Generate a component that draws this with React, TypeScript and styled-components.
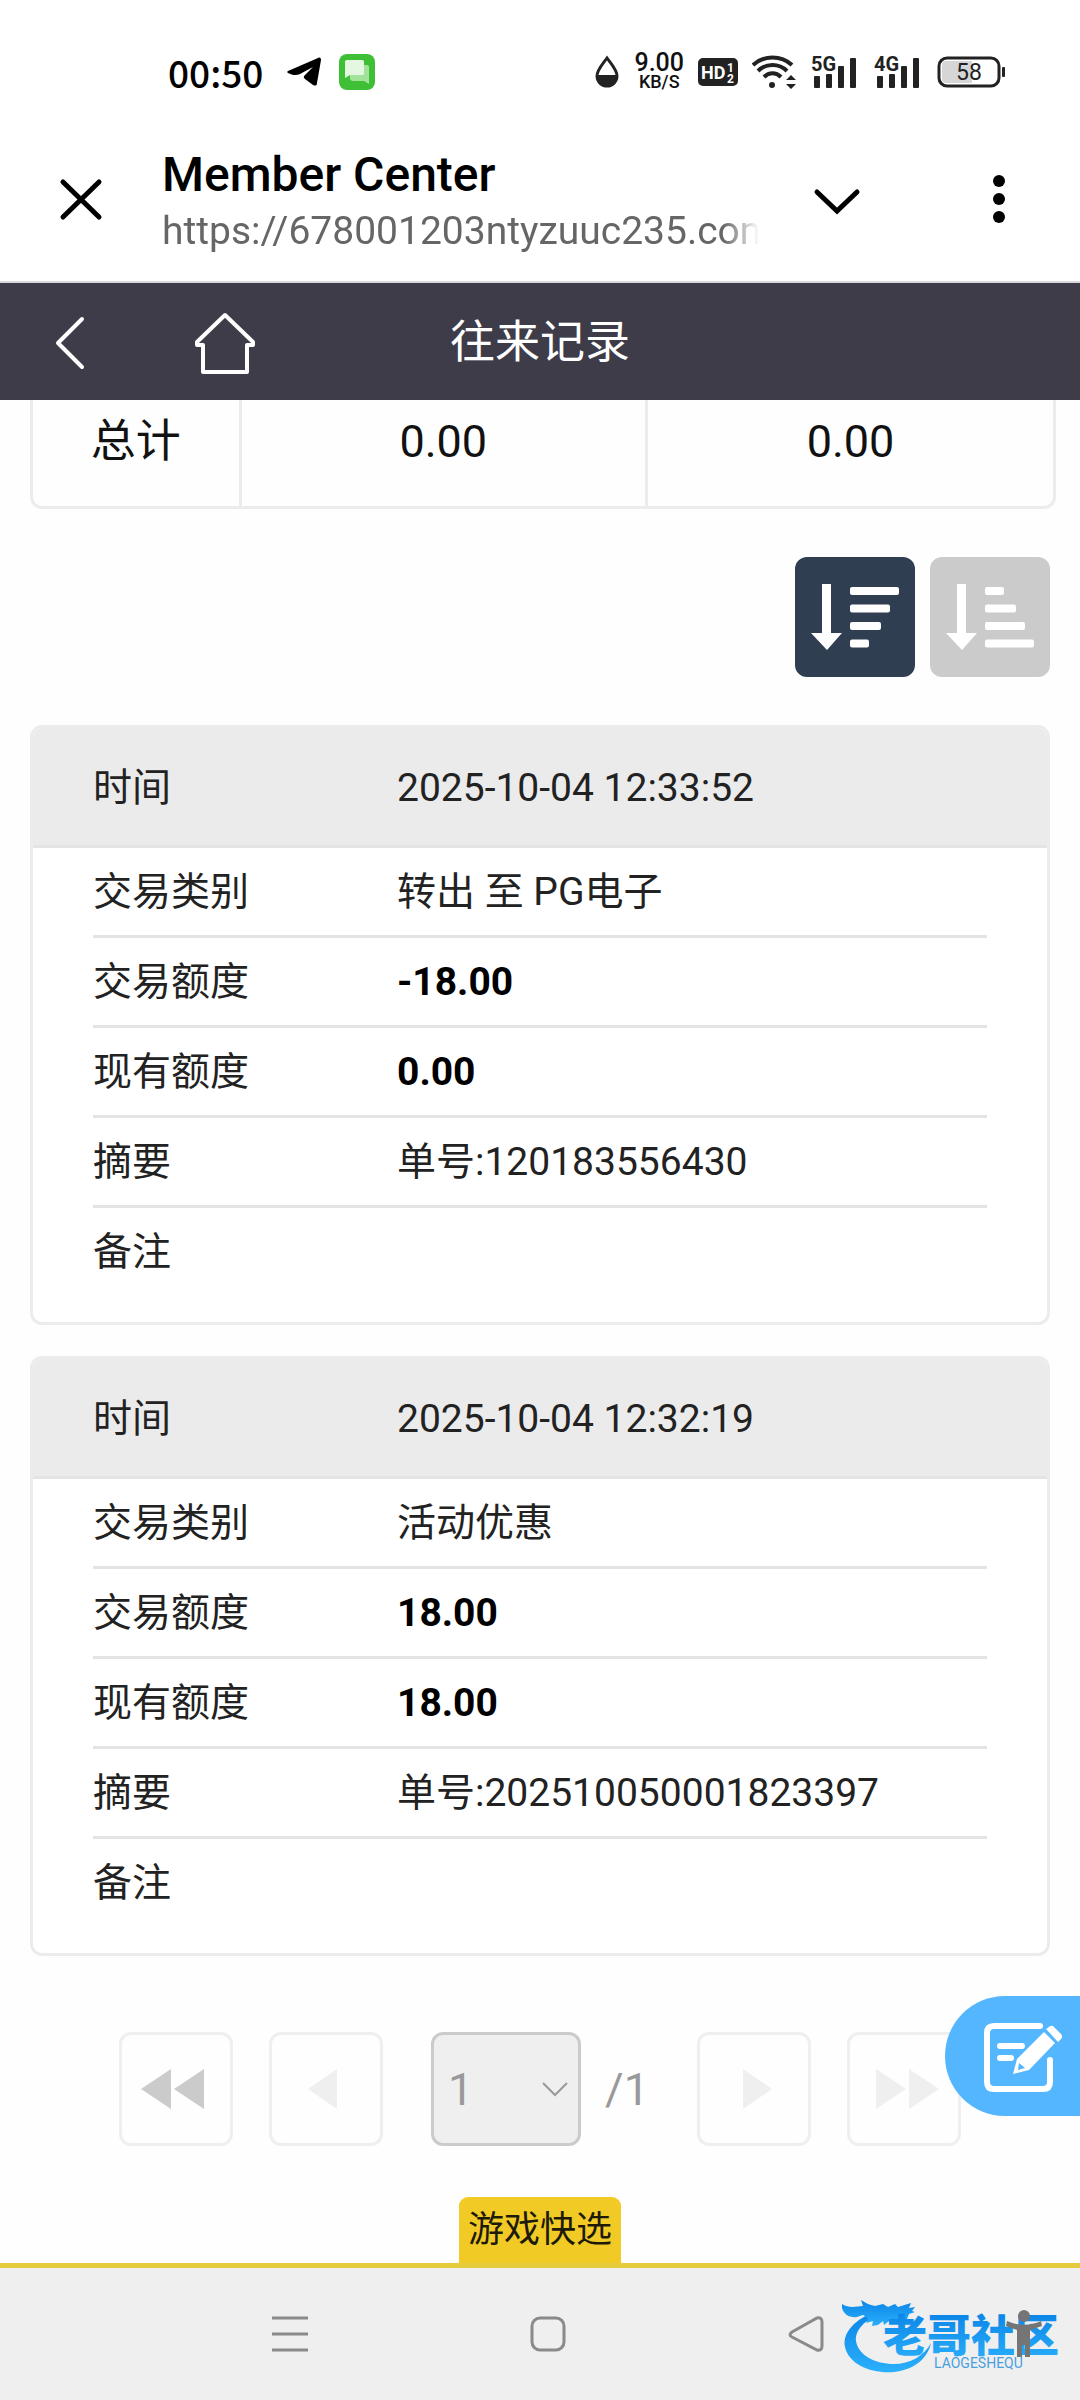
import React from "react";
import styled, { createGlobalStyle } from "styled-components";

const FONT = 'Roboto, "Noto Sans CJK SC", sans-serif';
const NARROW = '"Liberation Sans Narrow", Roboto, sans-serif';

const GlobalStyle = createGlobalStyle`
  * { box-sizing: border-box; }
  body { margin: 0; background: #fefefe; font-family: ${FONT}; color: #222; }
  button, select { font-family: inherit; }
  svg { display: block; flex: none; }
`;

const Page = styled.div`
  min-height: 100vh;
  display: flex;
  flex-direction: column;
  overflow-x: hidden;
`;

/* ---------- status bar ---------- */
const StatusBar = styled.div`
  display: flex;
  justify-content: space-between;
  align-items: center;
  height: 116px;
  padding: 28px 75px 0 168px;
  background: #fff;
`;
const StatusGroup = styled.div<{ $gap: number }>`
  display: flex;
  align-items: center;
  gap: ${(p) => p.$gap}px;
`;
const Clock = styled.time`
  font-family: "Noto Sans CJK SC", sans-serif;
  font-size: 37px;
  font-weight: 500;
  line-height: 44px;
  color: #000;
  margin-right: 6px;
`;
const NetSpeed = styled.div`
  display: flex;
  flex-direction: column;
  align-items: center;
  color: #111;
  font-weight: 500;
  font-size: 25px;
  line-height: 20px;
`;
const NetUnit = styled.span`
  font-size: 18px;
  line-height: 18px;
`;

/* ---------- browser bar ---------- */
const BrowserBar = styled.header`
  display: flex;
  align-items: center;
  height: 167px;
  padding: 0 60px 0 54px;
  border-bottom: 2px solid #d8d8dc;
  background: #fff;
`;
const IconButton = styled.button`
  display: flex;
  align-items: center;
  justify-content: center;
  padding: 0;
  border: 0;
  background: none;
  color: inherit;
`;
const PageInfo = styled.div`
  flex: 1;
  min-width: 0;
  margin: 4px 48px 0 54px;
`;
const PageTitle = styled.div`
  font-size: 48px;
  line-height: 60px;
  font-weight: 500;
  color: #000;
`;
const PageUrl = styled.div`
  font-size: 39px;
  line-height: 52px;
  color: #666;
  white-space: nowrap;
  overflow: hidden;
  mask-image: linear-gradient(to right, #000 94%, transparent 100%);
`;
const BrowserActions = styled.div`
  display: flex;
  align-items: center;
  gap: 111px;
`;

/* ---------- site header ---------- */
const SiteHeader = styled.nav`
  display: grid;
  grid-template-columns: 1fr auto 1fr;
  align-items: center;
  height: 117px;
  padding: 2px 52px 0;
  background: #3d3c48;
  color: #fff;
`;
const HeaderLinks = styled.div`
  display: flex;
  align-items: center;
  gap: 105px;
`;
const HeaderTitle = styled.h1`
  margin: 0;
  font-size: 45px;
  line-height: 60px;
  font-weight: 400;
`;

/* ---------- content ---------- */
const Content = styled.main`
  flex: 1;
  display: flex;
  flex-direction: column;
  padding: 0 30px;
`;
const TotalsFrame = styled.div`
  margin: 0 -6px 0 0;
  border: 3px solid #ececec;
  border-top: 0;
  border-radius: 0 0 12px 12px;
`;
const Totals = styled.table`
  width: 100%;
  table-layout: fixed;
  border-collapse: collapse;
  font-size: 45px;
  line-height: 54px;
  color: #111;
`;
const TotalLabel = styled.th`
  width: 207px;
  padding: 15px 0 37px;
  font-weight: 400;
`;
const TotalValue = styled.td`
  padding: 15px 0 37px;
  border-left: 3px solid #ececec;
  text-align: center;
`;
const SortRow = styled.div`
  display: flex;
  justify-content: flex-end;
  gap: 15px;
  margin: 48px 0;
`;
const SortButton = styled(IconButton)<{ $active?: boolean }>`
  width: 120px;
  height: 120px;
  border-radius: 12px;
  background: ${(p) => (p.$active ? "#303e51" : "#cbcbcb")};
`;
const CardList = styled.div`
  display: flex;
  flex-direction: column;
  gap: 31px;
`;
const Card = styled.dl`
  margin: 0;
  padding-bottom: 27px;
  border: 3px solid #ececec;
  border-radius: 12px;
  overflow: hidden;
  background: #fff;
  font-size: 39px;
  line-height: 54px;
`;
const CardRow = styled.div`
  display: flex;
  align-items: center;
  height: 90px;
  margin: 0 60px;
  border-bottom: 3px solid #e4e4e4;
  &:last-child { border-bottom: 0; height: 87px; }
`;
const CardHead = styled(CardRow)`
  height: 120px;
  margin: 0;
  padding: 2px 60px 0;
  background: #ebebeb;
`;
const Label = styled.dt`
  width: 304px;
`;
const Value = styled.dd<{ $strong?: boolean }>`
  margin: 0;
  font-weight: ${(p) => (p.$strong ? 700 : 400)};
  color: ${(p) => (p.$strong ? "#000" : "inherit")};
`;

/* ---------- pager ---------- */
const Pager = styled.nav`
  position: relative;
  display: flex;
  justify-content: center;
  gap: 36px;
  margin: 76px 0 50px;
`;
const PagerButton = styled(IconButton)<{ $strong?: boolean }>`
  width: 114px;
  height: 114px;
  border: 3px solid #efefef;
  border-radius: 12px;
  color: ${(p) => (p.$strong ? "#cbcbcb" : "#efefef")};
`;
const PageStatus = styled.div`
  display: flex;
  align-items: center;
  gap: 24px;
  margin: 0 12px;
  font-size: 45px;
  color: #999;
`;
const SelectBox = styled.label`
  position: relative;
  display: block;
`;
const PageSelect = styled.select`
  appearance: none;
  display: block;
  width: 150px;
  height: 114px;
  padding: 0 14px;
  border: 3px solid #cbcbcb;
  border-radius: 12px;
  background: #efefef;
  font-size: 45px;
  color: #999;
  opacity: 1;
`;
const SelectArrow = styled.svg`
  position: absolute;
  right: 13px;
  top: 49px;
  pointer-events: none;
`;
const FeedbackButton = styled(IconButton)`
  position: absolute;
  right: -30px;
  top: -36px;
  width: 135px;
  height: 120px;
  padding-left: 20px;
  border-radius: 60px 0 0 60px;
  background: #53b6ff;
  color: #fff;
`;

/* ---------- bottom ---------- */
const QuickPick = styled.button`
  align-self: center;
  margin-top: auto;
  height: 66px;
  padding: 0 9px;
  border: 0;
  border-radius: 9px 9px 0 0;
  background: #f1ca26;
  color: #1d1a08;
  font-size: 36px;
  line-height: 54px;
`;
const SystemNav = styled.nav`
  position: relative;
  display: grid;
  grid-template-columns: repeat(3, 258px) 1fr;
  align-items: center;
  height: 137px;
  padding: 0 36px 0 161px;
  border-top: 5px solid #e6cb3c;
  background: #efefef;
  color: #8a8a8a;
`;
const AccessButton = styled(IconButton)`
  justify-self: end;
  z-index: 1;
  color: #757575;
`;
const Watermark = styled.svg`
  position: absolute;
  right: 10px;
  top: 26px;
`;

type Entry = {
  time: string;
  kind: string;
  amount: string;
  balance: string;
  summary: string;
};

const entries: Entry[] = [
  { time: "2025-10-04 12:33:52", kind: "转出 至 PG电子", amount: "-18.00", balance: "0.00", summary: "单号:120183556430" },
  { time: "2025-10-04 12:32:19", kind: "活动优惠", amount: "18.00", balance: "18.00", summary: "单号:202510050001823397" },
];

const Signal = ({ label }: { label: string }) => (
  <svg width="46" height="46" viewBox="0 -6 46 46" fill="#222">
    <text x="0" y="16" fontFamily={NARROW} fontSize="20" fontWeight="700">{label}</text>
    <rect x="3" y="21" width="6" height="12" rx="1" />
    <rect x="15" y="19" width="6" height="14" rx="1" />
    <rect x="27" y="11" width="6" height="22" rx="1" />
    <rect x="39" y="3" width="6" height="30" rx="1" />
  </svg>
);

const SortIcon = ({ widths }: { widths: number[] }) => (
  <svg width="120" height="120" viewBox="0 0 120 120" fill="#fff">
    <path d="M27 27h9v49h11L32 93 16 76h11z" />
    {widths.map((w, i) => (
      <rect key={i} x="55" y={30 + i * 17.5} width={w} height="8" rx="2" />
    ))}
  </svg>
);

const Arrows = ({ double, flip }: { double?: boolean; flip?: boolean }) => (
  <svg width="72" height="42" viewBox="0 0 72 42" fill="currentColor">
    <g transform={flip ? "translate(72 0) scale(-1 1)" : undefined}>
      {double ? <path d="M1 21 31 1v40zM34 21 64 1v40z" /> : <path d="M18 21 47 1v40z" />}
    </g>
  </svg>
);

const EntryCard = ({ entry }: { entry: Entry }) => (
  <Card>
    <CardHead><Label>时间</Label><Value>{entry.time}</Value></CardHead>
    <CardRow><Label>交易类别</Label><Value>{entry.kind}</Value></CardRow>
    <CardRow><Label>交易额度</Label><Value $strong>{entry.amount}</Value></CardRow>
    <CardRow><Label>现有额度</Label><Value $strong>{entry.balance}</Value></CardRow>
    <CardRow><Label>摘要</Label><Value>{entry.summary}</Value></CardRow>
    <CardRow><Label>备注</Label><Value /></CardRow>
  </Card>
);

const BrandMark = () => (
  <Watermark width="228" height="84" viewBox="0 0 228 84" aria-hidden="true">
    <defs>
      <linearGradient id="brand" x1="0" y1="0" x2="0" y2="1">
        <stop offset="0" stopColor="#0b84e6" />
        <stop offset="1" stopColor="#2bb0fb" />
      </linearGradient>
    </defs>
    <g fill="url(#brand)">
      <path d="M34 17C14 25 0 38 3 53c4 18 27 27 49 25 20-2 34-14 37-29-7 13-21 21-37 21-19 0-36-9-38-23-1-11 9-22 27-28z" />
      <path d="M0 10c8 5 15 2 21 2l-2-6c6 4 10 5 14 6l8-2 5 3 7-3 3 3 13-4-2 5 6-1-3 4 3 1-6 2-2 5 2 3-8-2-4 3-6 1-2-3-5 4-1-4-5 4-6 1 1-5-7 2 2-5-5-3-6 2c-7 1-13-2-15-9z" />
    </g>
    <text x="41" y="58" fontFamily={FONT} fontSize="44" fontWeight="900" fill="url(#brand)">老哥社区</text>
    <text x="92" y="74" fontFamily={FONT} fontSize="14" fontWeight="400" fill="#4a9fe0">LAOGESHEQU</text>
  </Watermark>
);

export default function App() {
  return (
    <Page>
      <GlobalStyle />
      <StatusBar>
        <StatusGroup $gap={18}>
          <Clock>00:50</Clock>
          <svg width="34" height="30" viewBox="0 0 34 30">
            <path d="M1 14 31 1c2-1 3 0 3 2l-4 23c0 3-2 3-4 2l-8-6c-2-2-1-3 0-4l8-8-13 7c-4 2-8 1-12-1-1-1-1-1 0-2z" fill="#000" />
          </svg>
          <svg width="36" height="36" viewBox="0 0 36 36">
            <rect width="36" height="36" rx="8" fill="#3fbf35" />
            <path d="M13 11h15c1 0 2 1 2 2v17l-5-3H14c-2 0-3-1-3-3v-8z" fill="#a3e29a" />
            <path d="M8 6h15c2 0 2 1 2 2v11c0 1 0 2-2 2H11l-5 3V8c0-1 0-2 2-2z" fill="#e4f8e1" />
          </svg>
        </StatusGroup>
        <StatusGroup $gap={14}>
          <svg width="26" height="34" viewBox="0 0 26 34">
            <path d="M13 3C8 10 3 15 3 21a10 10 0 0 0 20 0c0-6-5-11-10-18z" fill="#fff" stroke="#222" strokeWidth="3" />
            <path d="M3 21a10 10 0 0 0 20 0z" fill="#222" stroke="#222" strokeWidth="2" />
          </svg>
          <NetSpeed>9.00<NetUnit>KB/S</NetUnit></NetSpeed>
          <svg width="40" height="28" viewBox="0 0 40 28">
            <rect width="40" height="28" rx="5" fill="#222" />
            <g fill="#fff" fontFamily={NARROW} fontWeight="700">
              <text x="3" y="21" fontSize="18">HD</text>
              <text x="29" y="14" fontSize="12">1</text>
              <text x="29" y="25" fontSize="12">2</text>
            </g>
          </svg>
          <svg width="45" height="36" viewBox="0 0 45 36" fill="none" stroke="#222" strokeWidth="4">
            <path d="M1 11c11-10 28-10 39 0M6 17c8-8 21-8 29 0M12 23c5-5 12-5 17 0" />
            <circle cx="20" cy="31" r="3" fill="#222" stroke="none" />
            <path d="m34 26 5-5 5 5zm0 4 5 5 5-5z" fill="#222" stroke="none" />
          </svg>
          <StatusGroup $gap={17}>
            <Signal label="5G" />
            <Signal label="4G" />
            <svg width="68" height="32" viewBox="0 0 68 32">
              <rect x="2" y="2" width="60" height="28" rx="8" fill="#fff" stroke="#222" strokeWidth="3" />
              <path d="M9 5h26v22H9c-3 0-4-2-4-4V9c0-2 1-4 4-4z" fill="#d6d6d6" />
              <rect x="65" y="11" width="3" height="10" rx="1" fill="#222" />
              <text x="32" y="24" textAnchor="middle" fontFamily={FONT} fontSize="23" fill="#222">58</text>
            </svg>
          </StatusGroup>
        </StatusGroup>
      </StatusBar>

      <BrowserBar>
        <IconButton aria-label="Close">
          <svg width="54" height="54" viewBox="0 0 54 54" stroke="#000" strokeWidth="5" strokeLinecap="round">
            <path d="m9 10 36 35M45 10 9 45" />
          </svg>
        </IconButton>
        <PageInfo>
          <PageTitle>Member Center</PageTitle>
          <PageUrl>https://678001203ntyzuuc235.com</PageUrl>
        </PageInfo>
        <BrowserActions>
          <IconButton aria-label="Expand">
            <svg width="60" height="54" viewBox="0 0 60 54" fill="none" stroke="#000" strokeWidth="5" strokeLinecap="round">
              <path d="m10 20 20 19 20-19" />
            </svg>
          </IconButton>
          <IconButton aria-label="More">
            <svg width="42" height="54" viewBox="0 0 42 54">
              <circle cx="21" cy="9" r="6" /><circle cx="21" cy="27" r="6" /><circle cx="21" cy="45" r="6" />
            </svg>
          </IconButton>
        </BrowserActions>
      </BrowserBar>

      <SiteHeader>
        <HeaderLinks>
          <IconButton aria-label="返回">
            <svg width="36" height="60" viewBox="0 0 36 60" fill="none" stroke="#fff" strokeWidth="4" strokeLinecap="round" strokeLinejoin="round">
              <path d="M30 6 6 30l24 24" />
            </svg>
          </IconButton>
          <IconButton aria-label="首页">
            <svg width="64" height="64" viewBox="0 0 64 64" fill="none" stroke="#fff" strokeWidth="4" strokeLinejoin="round">
              <path d="M32 4 4 31v3h6v27h44V34h6v-3z" />
            </svg>
          </IconButton>
        </HeaderLinks>
        <HeaderTitle>往来记录</HeaderTitle>
      </SiteHeader>

      <Content>
        <TotalsFrame>
          <Totals>
            <tbody>
              <tr>
                <TotalLabel scope="row">总计</TotalLabel>
                <TotalValue>0.00</TotalValue>
                <TotalValue>0.00</TotalValue>
              </tr>
            </tbody>
          </Totals>
        </TotalsFrame>

        <SortRow>
          <SortButton $active aria-label="降序"><SortIcon widths={[49, 40, 31, 19]} /></SortButton>
          <SortButton aria-label="升序"><SortIcon widths={[19, 31, 40, 49]} /></SortButton>
        </SortRow>

        <CardList>
          {entries.map((entry) => <EntryCard key={entry.time} entry={entry} />)}
        </CardList>

        <Pager>
          <PagerButton $strong aria-label="首页"><Arrows double /></PagerButton>
          <PagerButton aria-label="上一页"><Arrows /></PagerButton>
          <PageStatus>
            <SelectBox>
              <PageSelect disabled aria-label="页码" defaultValue="1"><option>1</option></PageSelect>
              <SelectArrow width="26" height="16" viewBox="0 0 26 16" fill="none" stroke="#999" strokeWidth="2">
                <path d="m1 2 12 12L25 2" />
              </SelectArrow>
            </SelectBox>
            <span>/1</span>
          </PageStatus>
          <PagerButton aria-label="下一页"><Arrows flip /></PagerButton>
          <PagerButton aria-label="末页"><Arrows double flip /></PagerButton>
          <FeedbackButton aria-label="反馈">
            <svg width="82" height="72" viewBox="0 0 82 72" fill="none" stroke="#fff" strokeWidth="6" strokeLinecap="round">
              <path d="M58 6H12q-7 0-7 7v49q0 7 7 7h49q7 0 7-7V40" />
              <path d="M18 26h22M18 38h11" />
              <path d="M62 12 73 23 47 50 31 54l4-15z" fill="#fff" stroke="none" />
              <path d="m64 9 3-2c2-2 4-1 5 0l7 7c2 2 1 4 0 5l-3 3z" fill="#fff" stroke="none" />
              <path d="m37 43 6 5-7 2z" fill="#53b6ff" stroke="none" />
            </svg>
          </FeedbackButton>
        </Pager>
        <QuickPick>游戏快选</QuickPick>
      </Content>

      <SystemNav>
        <IconButton aria-label="菜单">
          <svg width="36" height="36" viewBox="0 0 36 36" stroke="currentColor" strokeWidth="3">
            <path d="M0 2h36M0 18h36M0 34h36" />
          </svg>
        </IconButton>
        <IconButton aria-label="主屏幕">
          <svg width="36" height="36" viewBox="0 0 36 36" fill="none" stroke="currentColor" strokeWidth="3">
            <rect x="2" y="2" width="32" height="32" rx="8" />
          </svg>
        </IconButton>
        <IconButton aria-label="后退">
          <svg width="36" height="36" viewBox="0 0 36 36" fill="none" stroke="currentColor" strokeWidth="3">
            <path d="M4 16 29 2q5-1 5 4v24q0 5-5 4L4 21q-4-2 0-5z" />
          </svg>
        </IconButton>
        <BrandMark />
        <AccessButton aria-label="无障碍">
          <svg width="40" height="48" viewBox="0 0 40 48" fill="currentColor">
            <circle cx="20" cy="6" r="6" />
            <path d="M3 11c11 5 23 5 34 0l1 5-12 4v27h-5V35h-3v12h-5V20L2 16z" />
          </svg>
        </AccessButton>
      </SystemNav>
    </Page>
  );
}
